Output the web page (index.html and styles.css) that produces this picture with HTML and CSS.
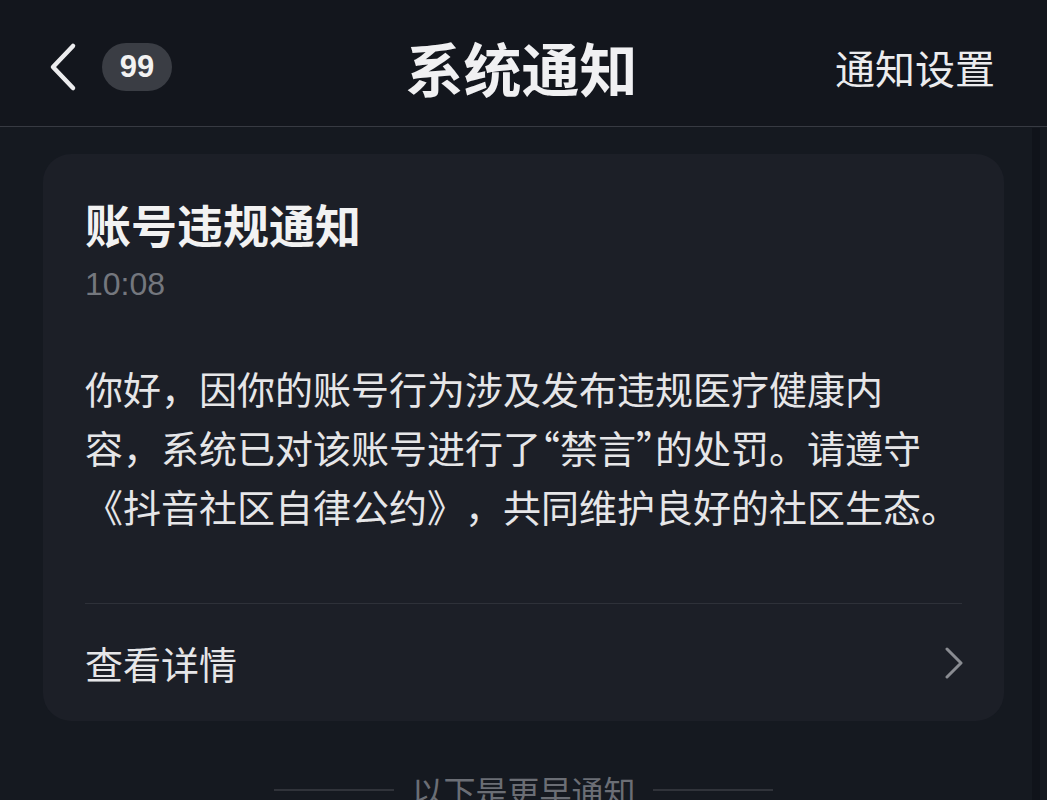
FILE: index.html
```html
<!DOCTYPE html>
<html lang="zh-CN">
<head>
  <meta charset="UTF-8">
  <title>系统通知</title>
  <link rel="stylesheet" href="styles.css">
</head>
<body>
  <header class="topbar">
    <div class="topbar-left">
      <svg class="back" width="30" height="50" viewBox="0 0 30 50" aria-hidden="true">
        <path d="M25 4 L5 25 L25 46" fill="none" stroke="#ececee" stroke-width="4.5" stroke-linecap="round" stroke-linejoin="round"/>
      </svg>
      <span class="badge">99</span>
    </div>
    <h1 class="topbar-title">系统通知</h1>
    <div class="topbar-right">通知设置</div>
  </header>

  <main class="content">
    <section class="card">
      <h2 class="card-title">账号违规通知</h2>
      <div class="card-time">10:08</div>
      <p class="card-body">你好，因你的账号行为涉及发布违规医疗健康内<br>容，系统已对该账号进行了<span class="quote">“禁言”</span>的处罚。请遵守《抖音社区自律公约》，共同维护良好的社区生态。</p>
      <div class="card-divider"></div>
      <div class="card-link">
        <span>查看详情</span>
        <svg width="20" height="32" viewBox="0 0 20 32" aria-hidden="true">
          <path d="M3 2 L17 16 L3 30" fill="none" stroke="#8a8c92" stroke-width="3" stroke-linecap="round" stroke-linejoin="round"/>
        </svg>
      </div>
    </section>

    <div class="earlier">
      <span class="earlier-line"></span>
      <span>以下是更早通知</span>
      <span class="earlier-line"></span>
    </div>
  </main>

  <div class="scroll-track"></div>
</body>
</html>
```

FILE: styles.css
```css
* {
  box-sizing: border-box;
}

body {
  margin: 0;
  height: 800px;
  overflow: hidden;
  background: #151920;
  color: #e8e8ea;
  font-family: "Noto Sans CJK SC", sans-serif;
  text-spacing-trim: space-all;
}

.topbar {
  height: 127px;
  padding: 8px 52px 0 48px;
  display: grid;
  grid-template-columns: 1fr auto 1fr;
  align-items: center;
  background: #13161d;
  border-bottom: 1px solid #373a42;
}

.topbar-left {
  display: flex;
  align-items: center;
  gap: 24px;
}

.back {
  display: block;
}

.badge {
  height: 48px;
  min-width: 70px;
  padding: 0 14px;
  border-radius: 24px;
  background: #3a3d44;
  color: #f2f2f2;
  font-family: "Liberation Sans", sans-serif;
  font-size: 31px;
  font-weight: bold;
  display: flex;
  align-items: center;
  justify-content: center;
}

.topbar-title {
  margin: 0;
  font-size: 58px;
  font-weight: bold;
  color: #f0f0f2;
}

.topbar-right {
  justify-self: end;
  font-size: 40px;
  color: #ececee;
}

.content {
  padding: 27px 43px 0;
}

.card {
  background: #1c1f27;
  border-radius: 28px;
  padding: 39px 42px 0;
}

.card-title {
  margin: 0;
  font-size: 46px;
  line-height: 60px;
  font-weight: bold;
  color: #f2f2f2;
}

.card-time {
  margin-top: 11px;
  font-family: "Liberation Sans", sans-serif;
  font-size: 32px;
  line-height: 40px;
  color: #74777e;
}

.card-body {
  margin: 54px 0 0;
  font-size: 38px;
  line-height: 59px;
  color: #e6e6e8;
}

.card-body .quote {
  font-feature-settings: "halt";
}

.card-divider {
  margin-top: 68px;
  height: 1px;
  background: #2e3139;
}

.card-link {
  height: 117px;
  display: flex;
  align-items: center;
  justify-content: space-between;
  font-size: 38px;
  color: #e6e6e8;
}

.card-link svg {
  margin-right: -2px;
}

.earlier {
  margin-top: 49px;
  display: flex;
  align-items: center;
  justify-content: center;
  gap: 17px;
  font-size: 32px;
  line-height: 40px;
  color: #6b6e75;
}

.earlier-line {
  width: 120px;
  height: 2px;
  background: #30333a;
}

.scroll-track {
  position: absolute;
  top: 128px;
  right: 7px;
  width: 8px;
  height: 672px;
  background: #10131a;
}
```
